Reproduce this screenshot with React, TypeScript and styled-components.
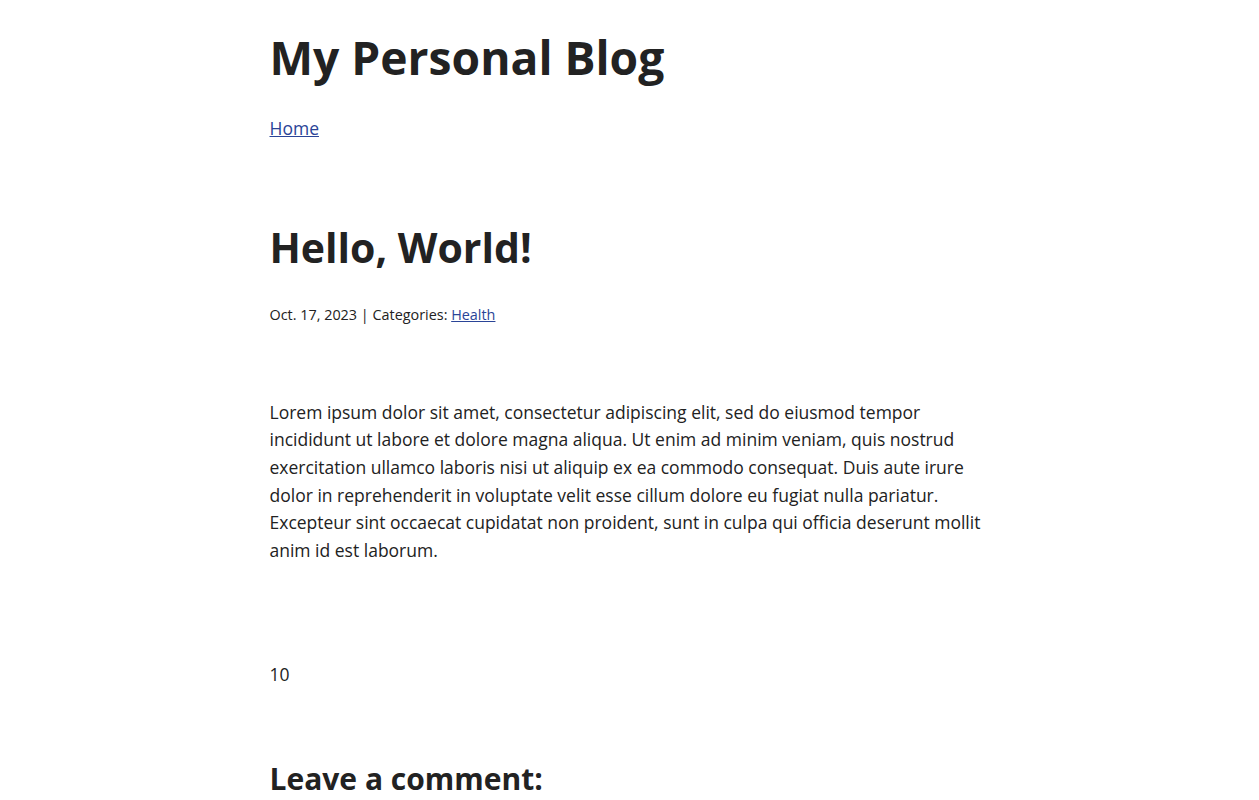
import React from "react";
import styled, { createGlobalStyle } from "styled-components";

const Global = createGlobalStyle`
  html, body { margin: 0; padding: 0; background: #ffffff; }
  body {
    font-family: "Open Sans", "Noto Sans", sans-serif;
    color: #222222;
  }
`;

const Page = styled.div`
  max-width: 720px;
  margin: 0 auto;
  display: flex;
  flex-direction: column;
`;

const SiteTitle = styled.h1`
  margin: 29.5px 0 0;
  font-size: 46.2px;
  line-height: 1.2;
  font-weight: 700;
  color: #222222;
`;

const Nav = styled.nav`
  margin-top: 30.5px;
  display: flex;
  gap: 16px;
  font-size: 17.5px;
  line-height: 1.5;
`;

const Link = styled.a`
  color: #2a4497;
  text-decoration: underline;
`;

const Article = styled.article`
  display: flex;
  flex-direction: column;
`;

const PostTitle = styled.h2`
  margin: 81.1px 0 0;
  font-size: 41px;
  line-height: 1.2;
  font-weight: 700;
`;

const Meta = styled.p`
  margin: 31.9px 0 0;
  font-size: 14.4px;
  line-height: 1.5;
`;

const Body = styled.p<{ $gap: number }>`
  margin: ${(p) => p.$gap}px 0 0;
  font-size: 17.5px;
  line-height: 27.6px;
`;

const CommentTitle = styled.h3`
  margin: 72.9px 0 0;
  font-size: 30px;
  line-height: 1.2;
  font-weight: 700;
`;

export default function App() {
  return (
    <>
      <Global />
      <Page>
        <SiteTitle>My Personal Blog</SiteTitle>
        <Nav>
          <Link href="#">Home</Link>
        </Nav>
        <Article>
          <PostTitle>Hello, World!</PostTitle>
          <Meta>
            Oct. 17, 2023 | Categories: <Link href="#">Health</Link>
          </Meta>
          <Body $gap={73.4}>
            Lorem ipsum dolor sit amet, consectetur adipiscing elit, sed do eiusmod tempor
            incididunt ut labore et dolore magna aliqua. Ut enim ad minim veniam, quis nostrud
            exercitation ullamco laboris nisi ut aliquip ex ea commodo consequat. Duis aute irure
            dolor in reprehenderit in voluptate velit esse cillum dolore eu fugiat nulla pariatur.
            Excepteur sint occaecat cupidatat non proident, sunt in culpa qui officia deserunt
            mollit anim id est laborum.
          </Body>
          <Body $gap={96.3}>10</Body>
          <CommentTitle>Leave a comment:</CommentTitle>
        </Article>
      </Page>
    </>
  );
}
